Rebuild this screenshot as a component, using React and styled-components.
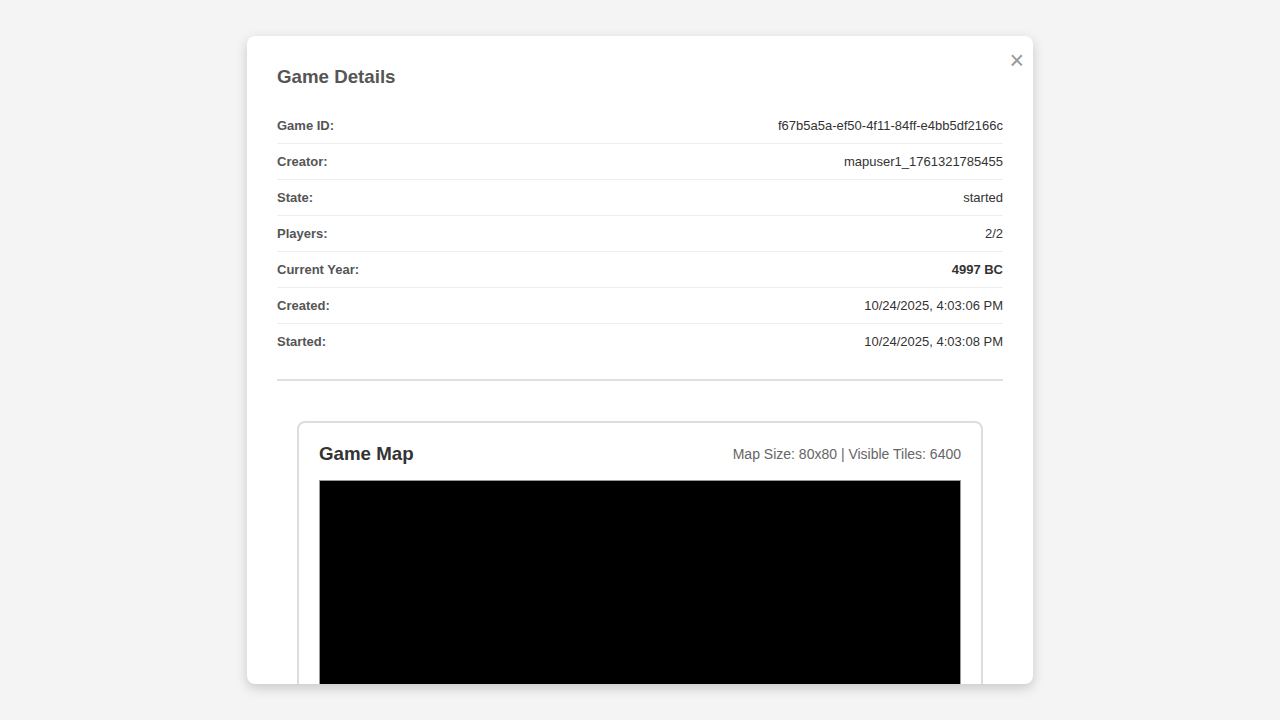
import React from "react";
import styled, { createGlobalStyle } from "styled-components";

const Global = createGlobalStyle`
  html, body { margin: 0; padding: 0; }
  body {
    background: #f4f4f4;
    font-family: "Liberation Sans", Arial, sans-serif;
    height: 720px;
    overflow: hidden;
  }
`;

const Page = styled.div`
  height: 720px;
  display: flex;
  align-items: center;
  justify-content: center;
`;

const Modal = styled.div`
  position: relative;
  width: 786px;
  height: 648px;
  box-sizing: border-box;
  background: #fff;
  border-radius: 8px;
  box-shadow: 0 4px 12px rgba(0, 0, 0, 0.18);
  padding: 30px;
  overflow: hidden;
`;

const Close = styled.button`
  position: absolute;
  top: 12px;
  right: 5px;
  border: none;
  background: none;
  color: #999;
  font-size: 25px;
  line-height: 24px;
  padding: 0 4px;
  cursor: pointer;
  font-family: "Liberation Sans", Arial, sans-serif;
`;

const Title = styled.h2`
  margin: 0 0 20px;
  font-size: 18.72px;
  line-height: 22px;
  font-weight: bold;
  color: #555;
`;

const Row = styled.div`
  display: flex;
  justify-content: space-between;
  align-items: center;
  padding: 10px 0;
  line-height: 15px;
  font-size: 13px;
  border-bottom: 1px solid ${(p) => (p.$last ? "transparent" : "#eee")};
`;

const Label = styled.span`
  font-weight: bold;
  color: #555;
`;

const Value = styled.span`
  color: #333;
  font-weight: ${(p) => (p.$bold ? "bold" : "normal")};
`;

const Divider = styled.hr`
  border: none;
  border-top: 2px solid #e0e0e0;
  margin: 19px 0 0;
`;

const MapSection = styled.div`
  padding-top: 20px;
`;

const MapCard = styled.div`
  margin: 20px;
  border: 2px solid #ddd;
  border-radius: 8px;
  padding: 18px 20px 20px;
`;

const MapHeader = styled.div`
  display: flex;
  justify-content: space-between;
  align-items: center;
  margin-bottom: 13px;
`;

const MapTitle = styled.h3`
  margin: 0;
  font-size: 18.72px;
  line-height: 26px;
  font-weight: bold;
  color: #333;
`;

const MapMeta = styled.span`
  font-size: 14px;
  color: #666;
`;

const Canvas = styled.div`
  height: 400px;
  background: #000;
  border: 1px solid #999;
`;

const rows = [
  ["Game ID:", "f67b5a5a-ef50-4f11-84ff-e4bb5df2166c"],
  ["Creator:", "mapuser1_1761321785455"],
  ["State:", "started"],
  ["Players:", "2/2"],
  ["Current Year:", "4997 BC", true],
  ["Created:", "10/24/2025, 4:03:06 PM"],
  ["Started:", "10/24/2025, 4:03:08 PM"],
];

export default function App() {
  return (
    <>
      <Global />
      <Page>
        <Modal>
          <Close aria-label="Close">×</Close>
          <Title>Game Details</Title>
          {rows.map(([l, v, b], i) => (
            <Row key={l} $last={i === rows.length - 1}>
              <Label>{l}</Label>
              <Value $bold={b}>{v}</Value>
            </Row>
          ))}
          <Divider />
          <MapSection>
            <MapCard>
              <MapHeader>
                <MapTitle>Game Map</MapTitle>
                <MapMeta>Map Size: 80x80 | Visible Tiles: 6400</MapMeta>
              </MapHeader>
              <Canvas />
            </MapCard>
          </MapSection>
        </Modal>
      </Page>
    </>
  );
}
